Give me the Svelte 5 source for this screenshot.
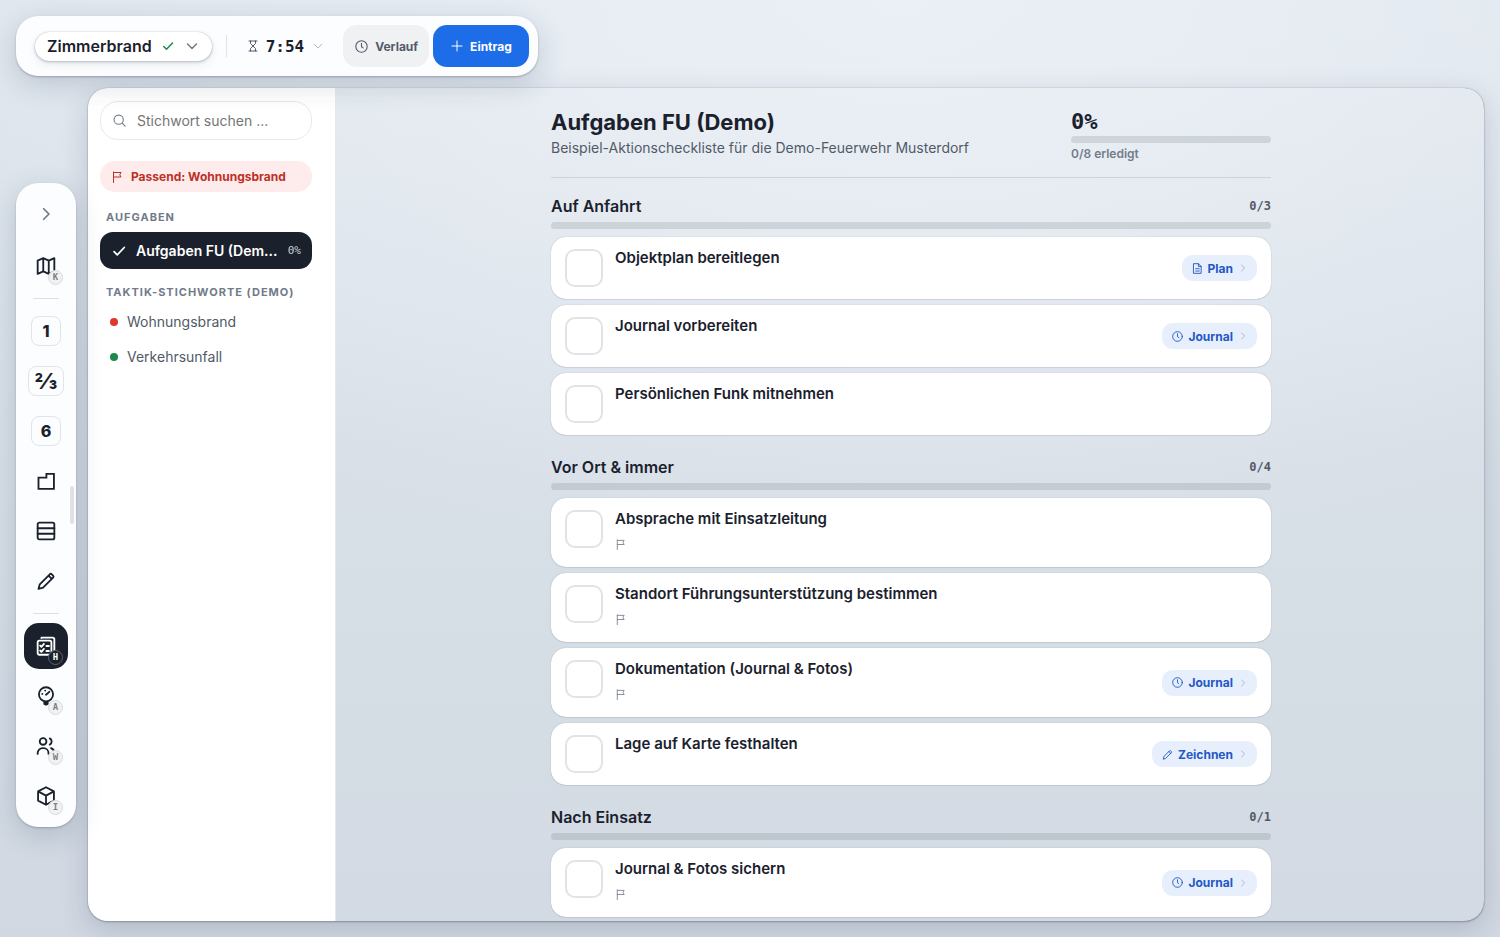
<script>
    const rail = [
        { icon: 'expand', label: 'Leiste ausklappen' },
        { icon: 'map', label: 'Karte', key: 'K' },
        { sep: true },
        { text: '1', label: 'Ebene 1' },
        { text: '⅔', label: 'Ebene 2/3' },
        { text: '6', label: 'Ebene 6' },
        { icon: 'shape', label: 'Grundriss' },
        { icon: 'rows', label: 'Tabelle' },
        { icon: 'pencil', label: 'Zeichnen' },
        { sep: true },
        { icon: 'checks', label: 'Aufgaben', key: 'H', active: true },
        { icon: 'gauge', label: 'Atemschutz', key: 'A' },
        { icon: 'users', label: 'Wer', key: 'W' },
        { icon: 'box', label: 'Inventar', key: 'I' },
    ];

    const keywords = [
        { name: 'Wohnungsbrand', color: 'red' },
        { name: 'Verkehrsunfall', color: 'green' },
    ];

    const listName = 'Aufgaben FU (Demo)';
    const shorten = (name, max = 16) => name.length > max ? name.slice(0, max) + '...' : name;

    let sections = $state([
        {
            title: 'Auf Anfahrt',
            tasks: [
                { text: 'Objektplan bereitlegen', link: 'Plan', icon: 'file' },
                { text: 'Journal vorbereiten', link: 'Journal', icon: 'clock' },
                { text: 'Persönlichen Funk mitnehmen' },
            ],
        },
        {
            title: 'Vor Ort & immer',
            tasks: [
                { text: 'Absprache mit Einsatzleitung', flag: true },
                { text: 'Standort Führungsunterstützung bestimmen', flag: true },
                { text: 'Dokumentation (Journal & Fotos)', flag: true, link: 'Journal', icon: 'clock' },
                { text: 'Lage auf Karte festhalten', link: 'Zeichnen', icon: 'pencil' },
            ],
        },
        {
            title: 'Nach Einsatz',
            tasks: [
                { text: 'Journal & Fotos sichern', flag: true, link: 'Journal', icon: 'clock' },
            ],
        },
    ]);

    let search = $state('');

    const count = (tasks) => tasks.filter((t) => t.done).length;
    let all = $derived(sections.flatMap((s) => s.tasks));
    let done = $derived(count(all));
    let percent = $derived(Math.round((done / all.length) * 100));
</script>

{#snippet icon(name, size = 24, stroke = 2)}
    <svg width={size} height={size} viewBox="0 0 24 24" fill="none" stroke="currentColor"
        stroke-width={stroke} stroke-linecap="round" stroke-linejoin="round" aria-hidden="true">
        {#if name === 'check'}
            <path d="M3.500 13l5.500 5.500L21 6" />
        {:else if name === 'down'}
            <path d="M3 8l9 9 9-9" />
        {:else if name === 'expand'}
            <path d="M8 3l9 9-9 9" />
        {:else if name === 'hourglass'}
            <path d="M4 2h16M4 22h16M7 2v5l5 5 5-5V2M7 22v-5l5-5 5 5v5" />
        {:else if name === 'clock'}
            <circle cx="12" cy="12" r="10.500" />
            <path d="M12 6v6.500l3 2" />
        {:else if name === 'plus'}
            <path d="M12 2v20M2 12h20" />
        {:else if name === 'search'}
            <circle cx="10.500" cy="10.500" r="8.500" />
            <path d="M17 17l5.500 5.500" />
        {:else if name === 'flag'}
            <path d="M5 23V2M5 3h15l-2.500 4.500L20 12H5" />
        {:else if name === 'file'}
            <path d="M4 1.500h10l6 6v15H4zM14 1.500v6h6M8 12.500h8M8 17.500h8" />
        {:else if name === 'map'}
            <path d="M2 5.500L8.700 2.500l6.600 3L22 2.500v16l-6.700 3-6.600-3-6.700 3zM8.700 2.500v16M15.300 5.500v16" />
        {:else if name === 'shape'}
            <path d="M3 8h9.500V3.500h9V21.500H3z" stroke-linejoin="miter" />
        {:else if name === 'rows'}
            <rect x="2" y="2" width="20" height="20" rx="2" />
            <path d="M2 8.700h20M2 15.300h20" />
        {:else if name === 'pencil'}
            <path d="M3 21.500l1.500-5.500L16.500 4a1.800 1.800 0 0 1 2.500 0l1.500 1.500a1.800 1.800 0 0 1 0 2.500l-12 12zM15 5.500l4 4" />
        {:else if name === 'checks'}
            <path d="M6.500 2.500V2H20a2 2 0 0 1 2 2v13.500" />
            <rect x="2" y="5.500" width="16.500" height="17" rx="2" />
            <path d="M5 11.500l1.500 1.500 3-3.500M12.500 12h3M5 17.500L6.500 19l3-3.500M12.500 18h3" />
        {:else if name === 'gauge'}
            <circle cx="12" cy="10" r="8.500" />
            <path d="M12 10.500l4-3.500M7.500 9.500h.1M11 5.500h.1" />
            <path d="M10 19.500h4v2l-2 1-2-1z" fill="currentColor" />
        {:else if name === 'users'}
            <circle cx="8.500" cy="6.500" r="4" />
            <path d="M2 21.500v-1a6 6 0 0 1 6-6h1a6 6 0 0 1 6 6v1M16.500 2.800a4.200 4.200 0 0 1 0 7.500M18 14.500a6 6 0 0 1 4 5.500v1.500" />
        {:else if name === 'box'}
            <path d="M12 1.500l9.500 5v11l-9.500 5-9.500-5v-11zM2.500 6.500l9.500 5 9.500-5M12 11.500v11" />
        {/if}
    </svg>
{/snippet}

<div class="app">
    <header class="topbar">
        <button class="incident">
            Zimmerbrand
            <span class="ok">{@render icon('check', 12, 3)}</span>
            <span class="muted">{@render icon('down', 12, 3)}</span>
        </button>
        <button class="timer">
            {@render icon('hourglass', 12)}
            <span>7:54</span>
            <span class="faint">{@render icon('down', 10)}</span>
        </button>
        <div class="actions">
            <button class="log">{@render icon('clock', 13)} Verlauf</button>
            <button class="entry">{@render icon('plus', 12)} Eintrag</button>
        </div>
    </header>

    <div class="body">
        <nav class="rail" aria-label="Ansichten">
            {#each rail as item}
                {#if item.sep}
                    <hr />
                {:else}
                    <button class="tool" class:active={item.active} aria-label={item.label}>
                        {#if item.text}
                            <span class="level" class:fraction={item.text === '⅔'}>{item.text}</span>
                        {:else if item.icon === 'expand'}
                            <span class="muted">{@render icon('expand', 14, 3)}</span>
                        {:else}
                            {@render icon(item.icon, 20, 2.2)}
                        {/if}
                        {#if item.key}<kbd>{item.key}</kbd>{/if}
                    </button>
                {/if}
            {/each}
            <span class="thumb"></span>
        </nav>

        <div class="panel">
            <aside>
                <label class="search">
                    {@render icon('search', 13)}
                    <input type="text" placeholder="Stichwort suchen ..." aria-label="Stichwort suchen" bind:value={search} />
                </label>
                <button class="match">{@render icon('flag', 12)} Passend: Wohnungsbrand</button>
                <h3>Aufgaben</h3>
                <button class="list" title={listName}>
                    {@render icon('check', 14, 3)}
                    <span class="name">{shorten(listName)}</span>
                    <span class="pct">{percent}%</span>
                </button>
                <h3>Taktik-Stichworte (Demo)</h3>
                {#each keywords as k}
                    <button class="keyword"><i class={k.color}></i>{k.name}</button>
                {/each}
            </aside>

            <main>
                <div class="content">
                    <div class="head">
                        <div>
                            <h1>{listName}</h1>
                            <p>Beispiel-Aktionscheckliste für die Demo-Feuerwehr Musterdorf</p>
                        </div>
                        <div class="total">
                            <strong>{percent}%</strong>
                            <div class="bar"><div style="width: {percent}%"></div></div>
                            <small>{done}/{all.length} erledigt</small>
                        </div>
                    </div>

                    {#each sections as section}
                        <section>
                            <div class="title">
                                <h2>{section.title}</h2>
                                <span>{count(section.tasks)}/{section.tasks.length}</span>
                            </div>
                            <div class="bar">
                                <div style="width: {(count(section.tasks) / section.tasks.length) * 100}%"></div>
                            </div>
                            <ul>
                                {#each section.tasks as task}
                                    <li>
                                        <label>
                                            <input type="checkbox" bind:checked={task.done} />
                                            <span class="text">
                                                {task.text}
                                                {#if task.flag}
                                                    <span class="flag">{@render icon('flag', 11)}</span>
                                                {/if}
                                            </span>
                                        </label>
                                        {#if task.link}
                                            <a href="#{task.link.toLowerCase()}">
                                                {@render icon(task.icon, 11)}
                                                {task.link}
                                                <span class="go">{@render icon('expand', 8, 3)}</span>
                                            </a>
                                        {/if}
                                    </li>
                                {/each}
                            </ul>
                        </section>
                    {/each}
                </div>
            </main>
        </div>
    </div>
</div>

<style>
    :global(body) {
        margin: 0;
    }
    .app {
        --ink: #1a212d;
        --soft: #515a69;
        --mute: #727b8a;
        --mono: "DejaVu Sans Mono", monospace;

        box-sizing: border-box;
        height: 100vh;
        padding: 16px;
        display: flex;
        flex-direction: column;
        gap: 12px;

        color: var(--ink);
        font-family: Inter, sans-serif;
        background:
            radial-gradient(ellipse 70% 60% at 60% 0, #ebf0f6 0%, transparent 100%),
            linear-gradient(#dfe6ed, #d3dbe4 70%, #d1d8e2);
    }
    button {
        display: flex;
        align-items: center;
        border: 0;
        padding: 0;
        background: none;
        color: inherit;
        font: inherit;
        cursor: pointer;
    }
    svg {
        display: block;
        flex: none;
    }
    h1, h2, h3, p, ul {
        margin: 0;
        padding: 0;
    }
    .muted {
        color: var(--mute);
    }
    .faint {
        color: #a3a9b3;
    }

    /* top bar */
    .topbar {
        position: relative;
        z-index: 2;
        box-sizing: border-box;
        align-self: flex-start;
        height: 60px;
        padding: 0 9px 0 19px;
        display: flex;
        align-items: center;
        border-radius: 22px;
        background: #fcfdfe;
        box-shadow: 0 1px 2px rgba(30, 45, 70, .3), 0 8px 28px rgba(30, 45, 70, .18);
    }
    .incident {
        height: 29px;
        padding: 0 14px 0 12px;
        gap: 10px;
        border-radius: 15px;
        background: #fff;
        font-size: 16px;
        font-weight: 600;
        box-shadow: 0 0 1px rgba(30, 45, 70, .3), 0 1px 3px rgba(30, 45, 70, .25), 0 4px 10px rgba(30, 45, 70, .08);
    }
    .incident .muted {
        margin-left: 2px;
    }
    .ok {
        color: #1b8a4b;
    }
    .timer {
        height: 22px;
        margin-left: 14px;
        padding: 0 20px;
        gap: 7px;
        border-left: 1px solid #e0e4e9;
        color: var(--soft);
    }
    .timer span:first-of-type {
        color: var(--ink);
        font: 700 16px var(--mono);
    }
    .timer .faint {
        margin-left: 2px;
    }
    .actions {
        display: flex;
        gap: 4px;
    }
    .actions button {
        height: 42px;
        gap: 7px;
        border-radius: 14px;
        font-size: 12px;
        font-weight: 700;
    }
    .actions .log {
        padding: 0 11px 0 12px;
        background: #f0f1f3;
        color: var(--soft);
    }
    .actions .entry {
        padding: 0 17px 0 18px;
        background: #1e6de8;
        color: #fff;
    }

    /* rail */
    .body {
        flex: 1;
        min-height: 0;
        display: flex;
        align-items: center;
        gap: 12px;
    }
    .rail {
        position: relative;
        flex: none;
        box-sizing: border-box;
        width: 60px;
        padding: 8px;
        display: flex;
        flex-direction: column;
        gap: 4px;
        border-radius: 22px;
        background: #fbfdfe;
        box-shadow: 0 1px 2px rgba(30, 45, 70, .25), 0 8px 28px rgba(30, 45, 70, .18);
    }
    .rail hr {
        width: 26px;
        height: 1px;
        margin: 5px auto;
        border: 0;
        background: #dde1e6;
    }
    .tool {
        position: relative;
        height: 46px;
        justify-content: center;
        border-radius: 15px;
    }
    .tool:first-child {
        margin-bottom: 2px;
    }
    .tool.active {
        background: var(--ink);
        color: #fff;
    }
    .level {
        box-sizing: border-box;
        min-width: 30px;
        height: 30px;
        padding: 0 7px;
        border: 1px solid #e1e4e8;
        border-radius: 8px;
        font-size: 16px;
        font-weight: 800;
        line-height: 28px;
        text-align: center;
    }
    .fraction {
        padding: 0 6px;
        font-size: 22px;
    }
    kbd {
        position: absolute;
        right: 5px;
        bottom: 4px;
        box-sizing: border-box;
        width: 15px;
        height: 15px;
        border: 1px solid #d9dcdf;
        border-radius: 50%;
        background: #f0f1f2;
        color: #7b8087;
        font: 700 9px/13px var(--mono);
        text-align: center;
    }
    .active kbd {
        border-color: #5b626e;
        background: var(--ink);
        color: #fff;
    }
    .thumb {
        position: absolute;
        right: 2px;
        top: 303px;
        width: 4px;
        height: 38px;
        border-radius: 2px;
        background: #dfe1e4;
    }

    /* panel */
    .panel {
        flex: 1;
        align-self: stretch;
        min-width: 0;
        display: flex;
        overflow: hidden;
        border-radius: 20px;
        box-shadow: 0 0 1px rgba(30, 45, 70, .5), 0 1px 2px rgba(30, 45, 70, .3), 0 8px 28px rgba(30, 45, 70, .18);
    }
    aside {
        flex: none;
        box-sizing: border-box;
        width: 248px;
        padding: 13px 23px 12px 12px;
        border-right: 1px solid #e6eaee;
        background: #fff;
    }
    aside button {
        box-sizing: border-box;
        width: 100%;
    }
    .search {
        box-sizing: border-box;
        height: 39px;
        padding: 0 13px 0 12px;
        display: flex;
        align-items: center;
        gap: 11px;
        border: 1px solid #e6e8eb;
        border-radius: 18px;
        color: var(--mute);
    }
    .search input {
        flex: 1;
        min-width: 0;
        padding: 0;
        border: 0;
        outline: 0;
        background: none;
        color: var(--ink);
        font: 14px Inter, sans-serif;
    }
    .search input::placeholder {
        color: #757575;
    }
    .match {
        height: 31px;
        margin: 21px 0 17px;
        padding: 0 11px;
        gap: 8px;
        border-radius: 15px;
        background: #fdeceb;
        color: #be2f27;
        font-size: 12px;
        font-weight: 700;
    }
    h3 {
        padding-left: 6px;
        color: var(--mute);
        font-size: 11px;
        font-weight: 700;
        line-height: 16px;
        letter-spacing: 1px;
        text-transform: uppercase;
    }
    .list {
        height: 37px;
        margin: 7px 0 15px;
        padding: 0 11px 0 12px;
        gap: 10px;
        border-radius: 13px;
        background: var(--ink);
        color: #fff;
        font-size: 14px;
        font-weight: 600;
    }
    .name {
        flex: 1;
        text-align: left;
        white-space: nowrap;
    }
    .pct {
        color: #ccd0d6;
        font: 11px var(--mono);
    }
    .keyword {
        height: 35px;
        padding: 0 10px;
        gap: 9px;
        color: var(--soft);
        font-size: 14px;
    }
    h3 + .keyword {
        margin-top: 4px;
    }
    .keyword i {
        width: 8px;
        height: 8px;
        border-radius: 50%;
    }
    .red {
        background: #e0382e;
    }
    .green {
        background: #1b8a4b;
    }

    /* checklist */
    main {
        flex: 1;
        min-width: 0;
        overflow: hidden;
        padding: 0 16px 0 18px;
        background: rgba(255, 255, 255, .06);
    }
    .content {
        max-width: 720px;
        margin: 0 auto;
    }
    .head {
        padding: 20px 0 15px;
        display: flex;
        justify-content: space-between;
        border-bottom: 1px solid #cbd2db;
    }
    h1 {
        font-size: 22px;
        font-weight: 700;
        line-height: 28px;
    }
    .head p {
        margin-top: 3px;
        color: var(--soft);
        font-size: 14px;
        line-height: 18px;
    }
    .total {
        width: 200px;
    }
    .total strong {
        display: block;
        font: 700 22px/28px var(--mono);
    }
    .total small {
        display: block;
        margin-top: 3px;
        color: var(--mute);
        font-size: 12px;
        font-weight: 600;
        line-height: 16px;
    }
    .bar {
        height: 7px;
        overflow: hidden;
        border-radius: 4px;
        background: rgba(60, 70, 75, .14);
    }
    .bar div {
        height: 100%;
        background: #1b8a4b;
    }
    section {
        margin-top: 20px;
    }
    .head + section {
        margin-top: 16px;
    }
    .title {
        margin-bottom: 4px;
        display: flex;
        align-items: center;
        justify-content: space-between;
    }
    h2 {
        font-size: 16px;
        font-weight: 600;
        line-height: 24px;
    }
    .title span {
        color: var(--soft);
        font: 700 12px var(--mono);
    }
    ul {
        margin-top: 8px;
        display: flex;
        flex-direction: column;
        gap: 6px;
        list-style: none;
    }
    li {
        padding: 12px 14px;
        display: flex;
        align-items: center;
        border-radius: 15px;
        background: #fff;
        box-shadow: 0 0 1px rgba(30, 45, 70, .35), 0 1px 1px rgba(30, 45, 70, .08);
    }
    li label {
        flex: 1;
        display: flex;
        gap: 12px;
    }
    li input {
        appearance: none;
        flex: none;
        box-sizing: border-box;
        width: 38px;
        height: 38px;
        margin: 0;
        border: 2px solid #e2e3e5;
        border-radius: 10px;
        background: #fff;
    }
    li input:checked {
        border-color: #1b8a4b;
        background: #1b8a4b;
    }
    .text {
        font-size: 15px;
        font-weight: 600;
        line-height: 18px;
    }
    .flag {
        display: block;
        padding: 11px 0 5px;
        color: #7d8592;
    }
    li a {
        height: 26px;
        padding: 0 10px;
        display: flex;
        align-items: center;
        gap: 5px;
        border-radius: 11px;
        background: #e8effc;
        color: #1f58c6;
        font-size: 12px;
        font-weight: 700;
        text-decoration: none;
    }
    .go {
        margin-left: 1px;
        color: #a5b8df;
    }
</style>
